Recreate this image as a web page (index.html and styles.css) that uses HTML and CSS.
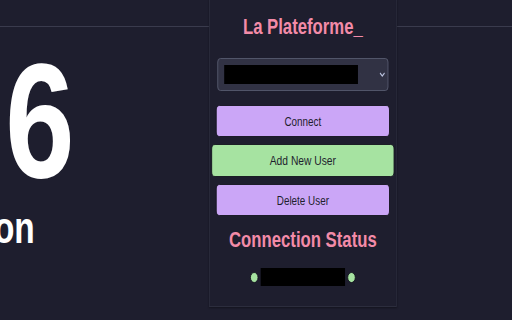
FILE: index.html
```html
<!DOCTYPE html>
<html lang="en">
<head>
<meta charset="utf-8">
<title>La Plateforme_</title>
<link rel="stylesheet" href="styles.css">
</head>
<body>
<div class="stage">
  <div class="topbar"></div>
  <div class="hero">
    <div class="hero-big">6</div>
    <div class="hero-sub">on</div>
  </div>

  <div class="popup">
    <h1 class="title">La Plateforme_</h1>
    <div class="select">
      <span class="redacted select-value"></span>
      <svg class="chevron" width="8" height="5" viewBox="0 0 8 5"><path d="M1 1 L4 4 L7 1" fill="none" stroke="#bac2de" stroke-width="1.3"/></svg>
    </div>
    <div class="buttons">
      <button class="btn btn-mauve">Connect</button>
      <button class="btn btn-green">Add New User</button>
      <button class="btn btn-mauve">Delete User</button>
    </div>
    <h2 class="status-title">Connection Status</h2>
    <div class="status-row">
      <span class="dot"></span>
      <span class="redacted status-value"></span>
      <span class="dot"></span>
    </div>
  </div>
</div>
</body>
</html>
```
FILE: styles.css
```css
html, body {
  margin: 0;
  padding: 0;
  background: #1e1e2e;
  overflow: hidden;
}
body {
  width: 512px;
  height: 320px;
  font-family: "Liberation Sans", Arial, sans-serif;
}
.stage {
  position: relative;
  width: 674px;
  height: 320px;
  transform: scaleX(0.76);
  transform-origin: 0 0;
}
.topbar {
  height: 26px;
  border-bottom: 1px solid #3a3b4d;
}
.hero {
  display: flex;
  flex-direction: column;
  margin-top: 12px;
  color: #ffffff;
  font-weight: bold;
}
.hero-big {
  font-size: 164px;
  line-height: 164px;
  padding-left: 7px;
}
.hero-sub {
  font-size: 44px;
  line-height: 44px;
  margin-top: 3px;
  margin-left: -8px;
}
.popup {
  position: absolute;
  left: 275px;
  top: -1px;
  width: 247px;
  height: 308px;
  box-sizing: border-box;
  border: 1px solid #2c2d3d;
  background: #1e1e2e;
  box-shadow: 0 1px 2px rgba(0,0,0,0.35);
  padding: 14px 10px 0;
  display: flex;
  flex-direction: column;
}
.title, .status-title {
  margin: 0;
  text-align: center;
  color: #f38ba8;
  font-size: 22px;
  line-height: 26px;
  font-weight: bold;
}
.select {
  margin-top: 18px;
  height: 33px;
  box-sizing: border-box;
  background: #313244;
  border: 1px solid #585b70;
  border-radius: 4px;
  display: flex;
  align-items: center;
  padding: 0 3px 0 8px;
  justify-content: space-between;
}
.redacted {
  display: block;
  background: #000;
}
.select-value {
  width: 176px;
  height: 19px;
}
.buttons {
  margin-top: 14px;
  display: flex;
  flex-direction: column;
  gap: 7px;
}
.btn {
  height: 32px;
  box-sizing: border-box;
  margin: 0 -2px;
  border: 1px solid #11111b;
  border-radius: 5px;
  background: #cba6f7;
  color: #1e1e2e;
  font-family: "Liberation Sans", Arial, sans-serif;
  font-size: 13px;
  padding: 0;
}
.btn-green {
  background: #a6e3a1;
  height: 33px;
  margin: 0 -8px;
  font-size: 13.5px;
}
.status-title {
  margin-top: 11px;
}
.status-row {
  margin-top: 15px;
  display: flex;
  justify-content: center;
  align-items: center;
  gap: 3px;
}
.status-value {
  width: 111px;
  height: 18px;
}
.dot {
  width: 11px;
  height: 11px;
  box-sizing: border-box;
  border-radius: 50%;
  background: #a6e3a1;
  border: 1px solid #11111b;
}
```
